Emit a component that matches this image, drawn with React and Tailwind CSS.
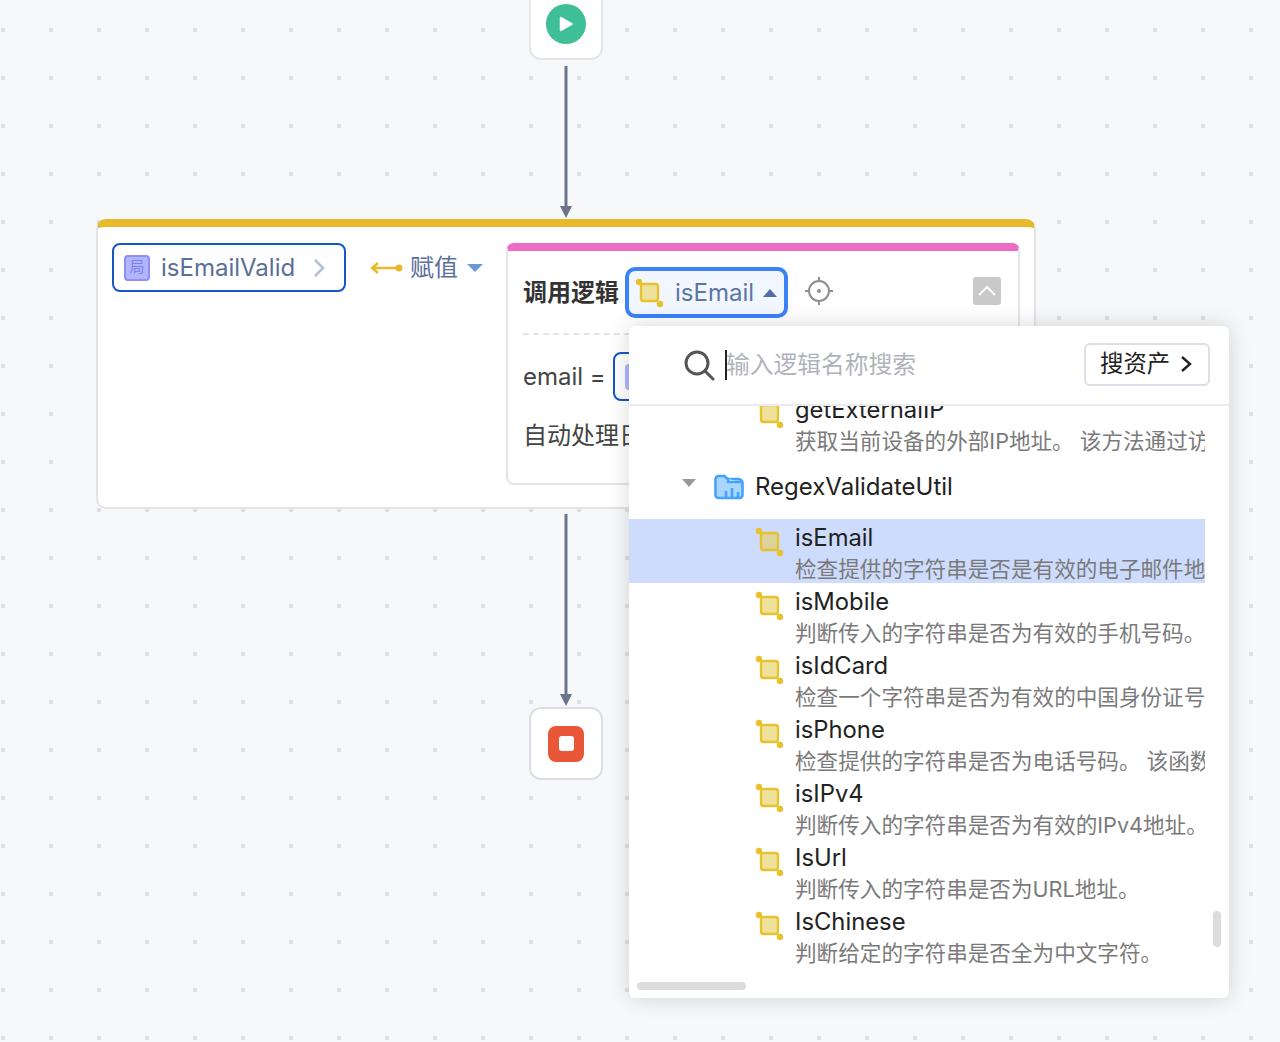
const FONT = "font-['Inter','Noto_Sans_CJK_SC',sans-serif]";

const logics = [
  { name: 'isEmail', desc: '检查提供的字符串是否是有效的电子邮件地址。', active: true },
  { name: 'isMobile', desc: '判断传入的字符串是否为有效的手机号码。' },
  { name: 'isIdCard', desc: '检查一个字符串是否为有效的中国身份证号码。' },
  { name: 'isPhone', desc: '检查提供的字符串是否为电话号码。 该函数通过正则表达式' },
  { name: 'isIPv4', desc: '判断传入的字符串是否为有效的IPv4地址。' },
  { name: 'IsUrl', desc: '判断传入的字符串是否为URL地址。' },
  { name: 'IsChinese', desc: '判断给定的字符串是否全为中文字符。' },
];

function LogicIcon({ active }) {
  return (
    <svg width="30" height="30" viewBox="0 0 30 30" className="shrink-0">
      <rect x="6" y="6" width="17" height="17" rx="2.5" fill={active ? '#dcd29b' : '#efe09c'} stroke="#e7c22f" strokeWidth="2.4" />
      <circle cx="4" cy="4" r="3.2" fill="#e7c22f" />
      <circle cx="25" cy="26" r="3.2" fill="#e7c22f" />
    </svg>
  );
}

function Arrow({ height, className }) {
  return (
    <svg width="14" height={height} viewBox={`0 0 14 ${height}`} className={`shrink-0 ${className}`}>
      <rect x="5.5" y="0" width="3" height={height - 8} fill="#6b7489" />
      <path d={`M1 ${height - 12} L13 ${height - 12} L7 ${height} Z`} fill="#6b7489" />
    </svg>
  );
}

function LogicRow({ name, desc, active }) {
  return (
    <div className={`flex h-16 shrink-0 items-start pl-[126px] ${active ? 'bg-[#cddcfd]' : ''}`}>
      <div className="mt-[8px] mr-[10px]">
        <LogicIcon active={active} />
      </div>
      <div className="min-w-0 whitespace-nowrap pt-[4px]">
        <div className="h-[30px] text-[23.8px] leading-[30px] text-[#222]">{name}</div>
        <div className="h-[30px] text-[21.6px] leading-[33px] text-[#7a7a7a]">{desc}</div>
      </div>
    </div>
  );
}

function Popup() {
  return (
    <div className="absolute left-[629px] top-[326px] h-[672px] w-[600px] rounded-[6px] bg-white shadow-[0_0_22px_rgba(0,0,0,0.16)]">
      <div className="flex h-[80px] items-center border-b-2 border-[#e9ebef] pl-[54px] pr-[19px]">
        <svg width="32" height="32" viewBox="0 0 32 32" fill="none" stroke="#555" strokeWidth="3" strokeLinecap="round" className="shrink-0">
          <circle cx="14" cy="14" r="11" />
          <path d="M22.5 22.5 L30 30" />
        </svg>
        <div className="ml-[10px] h-[30px] w-[2px] shrink-0 bg-[#222]" />
        <div className="-ml-[1px] flex-1 text-[23.75px] leading-[30px] text-[#b0b3ba]">输入逻辑名称搜索</div>
        <div className="-mt-[2px] flex h-[43px] w-[126px] items-center rounded-[6px] border-2 border-[#dcdfe5] pl-[14px] text-[23.4px] text-[#222]">
          搜资产
          <svg width="14" height="20" viewBox="0 0 14 20" fill="none" stroke="#222" strokeWidth="2.4" className="ml-[9px]">
            <path d="M3 3 L11 10 L3 17" />
          </svg>
        </div>
      </div>

      <div className="h-[564px] w-[576px] overflow-hidden">
        <div className="-mt-[15px] flex flex-col">
          <LogicRow name="getExternalIP" desc="获取当前设备的外部IP地址。 该方法通过访问外部服务" />
          <div className="flex h-16 items-center pl-[53px]">
            <div className="mb-[8px] h-0 w-0 border-x-[7px] border-t-[8px] border-x-transparent border-t-[#999]" />
            <svg width="30" height="26" viewBox="0 0 30 26" className="ml-[18px] shrink-0">
              <path d="M1.5 5 a3 3 0 0 1 3-3 h6 l3 3 h11 a4 4 0 0 1 4 4 v12 a3 3 0 0 1-3 3 h-21 a3 3 0 0 1-3-3 Z" fill="#a9d6ff" stroke="#45a2ff" strokeWidth="2.6" />
              <path d="M14 5 v3 h14" fill="#d9edff" stroke="#45a2ff" strokeWidth="2.4" />
              <path d="M12 24 v-7 M18 24 v-10 M24 24 v-6" stroke="#45a2ff" strokeWidth="2.6" />
            </svg>
            <div className="ml-[11px] text-[24px] leading-[30px] text-[#222]">RegexValidateUtil</div>
          </div>
          {logics.map((item) => (
            <LogicRow key={item.name} {...item} />
          ))}
        </div>
      </div>

      {/* scrollbars */}
      <div className="absolute left-[584px] top-[585px] h-[36px] w-[8px] rounded-full bg-[#dcdcdc]" />
      <div className="absolute left-[8px] top-[656px] h-[8px] w-[109px] rounded-full bg-[#dcdcdc]" />
    </div>
  );
}

export default function App() {
  return (
    <div
      className={`relative h-[1042px] w-[1280px] overflow-hidden bg-[#f7f8fa] bg-[radial-gradient(circle,#dcdee2_2px,transparent_2.5px)] bg-[length:48px_48px] bg-[position:-21px_6px] ${FONT}`}
    >
      <div className="ml-[96px] flex w-[940px] flex-col items-center">
        {/* start node */}
        <div className="-mt-[12px] flex h-[72px] w-[74px] items-center justify-center rounded-[12px] border-2 border-[#e3e5e9] bg-white">
          <div className="flex h-[40px] w-[40px] items-center justify-center rounded-full bg-[#3fbf97]">
            <svg width="16" height="16" viewBox="0 0 16 16">
              <path d="M2.5 1.5 L14 8 L2.5 14.5 Z" fill="white" stroke="white" strokeWidth="1.5" strokeLinejoin="round" />
            </svg>
          </div>
        </div>
        <Arrow height={152} className="mt-[6px]" />

        {/* main card */}
        <div className="mt-[1px] flex h-[290px] w-[940px] items-start rounded-[10px] border-x-2 border-b-2 border-t-[8px] border-[#e2e4e8] border-t-[#e8ba2b] bg-white pl-[14px] pr-[14px] pt-[16px]">
          <div className="flex h-[49px] w-[234px] shrink-0 items-center rounded-[8px] border-2 border-[#1557c8] pl-[10px]">
            <div className="flex h-[26px] w-[26px] items-center justify-center rounded-[4px] border-2 border-[#8f8ff7] bg-[#b3b6ff] text-[15px] text-[#7f7ff0]">局</div>
            <span className="ml-[11px] text-[24px] text-[#5a6f99]">isEmailValid</span>
            <svg width="12" height="20" viewBox="0 0 12 20" fill="none" stroke="#b6c0d4" strokeWidth="2.6" className="ml-[18px]">
              <path d="M2 2 L10 10 L2 18" />
            </svg>
          </div>

          <div className="ml-[25px] flex h-[49px] w-[135px] shrink-0 items-center">
            <svg width="32" height="12" viewBox="0 0 32 12" className="shrink-0">
              <path d="M7 1 L1 6 L7 11 M1 6 H28" fill="none" stroke="#e8ba2b" strokeWidth="2.4" />
              <circle cx="28" cy="6" r="3.5" fill="#e8ba2b" />
            </svg>
            <span className="ml-[7px] text-[24px] text-[#5a6f99]">赋值</span>
            <div className="ml-[9px] h-0 w-0 border-x-[8px] border-t-[8px] border-x-transparent border-t-[#6a98d4]" />
          </div>

          {/* inner card */}
          <div className="h-[242px] w-[514px] shrink-0 overflow-hidden rounded-[8px] border-x-2 border-b-2 border-t-[8px] border-[#e2e4e8] border-t-[#ee6cc4] bg-white px-[15px]">
            <div className="flex h-[84px] items-start border-b-2 border-dashed border-[#e2e4e8] pt-[16px]">
              <span className="mt-[13px] w-[102px] shrink-0 text-[24px] font-bold leading-[26px] text-[#333]">调用逻辑</span>
              <div className="flex h-[51px] w-[163px] shrink-0 items-center rounded-[10px] border-4 border-[#3b82f6] bg-[#f2f6fe] pl-[6px]">
                <LogicIcon />
                <span className="ml-[10px] text-[24px] text-[#5a77a5]">isEmail</span>
                <div className="ml-[9px] h-0 w-0 border-x-[7px] border-b-[8px] border-x-transparent border-b-[#52709f]" />
              </div>
              <svg width="30" height="30" viewBox="0 0 30 30" fill="none" stroke="#8e8e8e" strokeWidth="2" className="ml-[16px] mt-[9px] shrink-0">
                <circle cx="15" cy="15" r="10" />
                <circle cx="15" cy="15" r="2" fill="#8e8e8e" stroke="none" />
                <path d="M15 1 V5 M15 25 V29 M1 15 H5 M25 15 H29" />
              </svg>
              <div className="ml-[139px] mt-[10px] flex h-[28px] w-[28px] shrink-0 items-center justify-center rounded-[3px] bg-[#c9c9c9]">
                <svg width="20" height="12" viewBox="0 0 20 12" fill="none" stroke="white" strokeWidth="2">
                  <path d="M2 10 L10 2 L18 10" />
                </svg>
              </div>
            </div>
            <div className="mt-[17px] flex h-[49px] items-center">
              <span className="text-[24px] text-[#444]">email =</span>
              <div className="ml-[7px] flex h-[49px] w-[120px] items-center rounded-[8px] border-2 border-[#1557c8] pl-[10px]">
                <div className="h-[26px] w-[26px] rounded-[4px] bg-[#b3b6ff]" />
              </div>
            </div>
            <div className="mt-[19px] whitespace-nowrap text-[24px] leading-[32px] text-[#444]">自动处理日志</div>
          </div>
        </div>

        <Arrow height={192} className="mt-[5px]" />
        {/* end node */}
        <div className="mt-[1px] flex h-[73px] w-[74px] items-center justify-center rounded-[12px] border-2 border-[#dcdee3] bg-white">
          <div className="flex h-[36px] w-[36px] items-center justify-center rounded-[8px] bg-[#ea5638]">
            <div className="h-[15px] w-[15px] rounded-[3px] bg-white" />
          </div>
        </div>
      </div>

      <Popup />
    </div>
  );
}
